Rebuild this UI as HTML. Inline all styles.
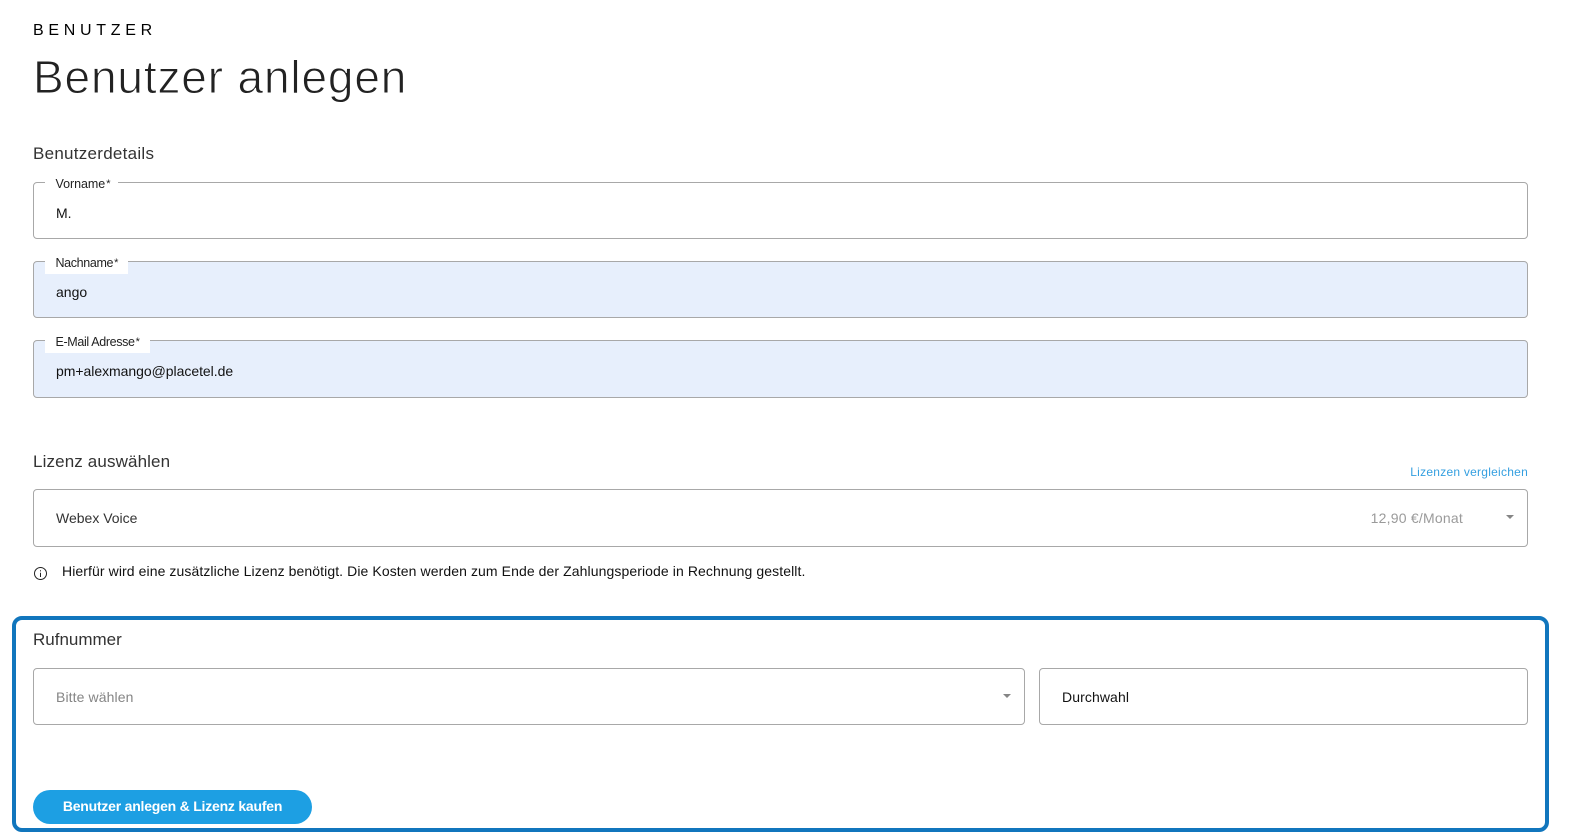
<!DOCTYPE html>
<html lang="de">
<head>
<meta charset="utf-8">
<title>Benutzer anlegen</title>
<style>
html,body{margin:0;padding:0;background:#fff;width:1595px;height:832px;overflow:hidden;font-family:"Liberation Sans",sans-serif;color:#121212}
.t{position:absolute;white-space:nowrap;line-height:20px}
.box{position:absolute;box-sizing:border-box;border:1px solid #a8a8a8;border-radius:4px;background:#fff}
.fill{background:#e7effc}
.lb{position:absolute;background:#fff;height:13px}
.car{position:absolute;width:0;height:0;border-left:4.5px solid transparent;border-right:4.5px solid transparent;border-top:4.5px solid #858585}
.ast{font-size:11px;margin-left:1px;position:relative;top:-1px}
</style>
</head>
<body>
<div class="t" style="left:33px;top:20.5px;font-size:16px;letter-spacing:4.7px;color:#000">BENUTZER</div>
<div class="t" style="left:33px;top:49px;line-height:56px;font-size:46px;color:#222;letter-spacing:.85px;-webkit-text-stroke:.9px #fff">Benutzer anlegen</div>

<div class="t" style="left:33px;top:144px;font-size:17px;color:#333;letter-spacing:.27px">Benutzerdetails</div>
<div class="box" style="left:33px;top:182px;width:1495px;height:57px"></div>
<div class="lb" style="left:45px;top:176px;width:73px"></div>
<div class="t" style="left:55.5px;top:174px;font-size:12.5px;color:#222;letter-spacing:-.05px">Vorname<span class="ast">*</span></div>
<div class="t" style="left:56px;top:203px;font-size:14px">M.</div>

<div class="box fill" style="left:33px;top:261px;width:1495px;height:57px"></div>
<div class="lb" style="left:45px;top:261px;width:83px"></div>
<div class="t" style="left:55.5px;top:253px;font-size:12.5px;color:#222;letter-spacing:-.35px">Nachname<span class="ast">*</span></div>
<div class="t" style="left:56px;top:282px;font-size:14px">ango</div>

<div class="box fill" style="left:33px;top:340px;width:1495px;height:58px"></div>
<div class="lb" style="left:45px;top:340px;width:105px"></div>
<div class="t" style="left:55.5px;top:332px;font-size:12.5px;color:#222;letter-spacing:-.35px">E-Mail Adresse<span class="ast">*</span></div>
<div class="t" style="left:56px;top:361px;font-size:14px;letter-spacing:-.04px">pm+alexmango@placetel.de</div>

<div class="t" style="left:33px;top:452px;font-size:17px;color:#333;letter-spacing:.13px">Lizenz auswählen</div>
<div class="t" style="right:67px;top:462px;font-size:12px;color:#349fe0;letter-spacing:.25px">Lizenzen vergleichen</div>
<div class="box" style="left:33px;top:489px;width:1495px;height:58px"></div>
<div class="t" style="left:56px;top:508px;font-size:14px;color:#333">Webex Voice</div>
<div class="t" style="right:132px;top:508px;font-size:14px;color:#9a9a9a;letter-spacing:.22px">12,90 €/Monat</div>
<div class="car" style="left:1505.5px;top:515px"></div>

<svg style="position:absolute;left:33px;top:566px" width="15" height="15" viewBox="0 0 15 15" fill="none" stroke="#222" stroke-width="1"><circle cx="7.5" cy="7.5" r="6"/><path d="M7.5 6.8V11M7.5 4.2v1.2"/></svg>
<div class="t" style="left:62px;top:561px;font-size:14px;color:#111;letter-spacing:.09px">Hierfür wird eine zusätzliche Lizenz benötigt. Die Kosten werden zum Ende der Zahlungsperiode in Rechnung gestellt.</div>

<div style="position:absolute;left:12px;top:616px;width:1537px;height:216px;box-sizing:border-box;border:4px solid #1176bd;border-radius:10px"></div>
<div class="t" style="left:33px;top:630px;font-size:17px;color:#333">Rufnummer</div>
<div class="box" style="left:33px;top:668px;width:992px;height:57px"></div>
<div class="t" style="left:56px;top:687px;font-size:14px;color:#858585;letter-spacing:.1px">Bitte wählen</div>
<div class="car" style="left:1002.5px;top:694px"></div>
<div class="box" style="left:1039px;top:668px;width:489px;height:57px"></div>
<div class="t" style="left:1062px;top:687px;font-size:14px;letter-spacing:.1px">Durchwahl</div>

<div style="position:absolute;left:33px;top:790px;width:279px;height:34px;border-radius:17px;background:#1d9fe3;color:#fff;font-size:14px;font-weight:bold;line-height:32px;text-align:center;letter-spacing:-.22px">Benutzer anlegen &amp; Lizenz kaufen</div>
</body>
</html>
